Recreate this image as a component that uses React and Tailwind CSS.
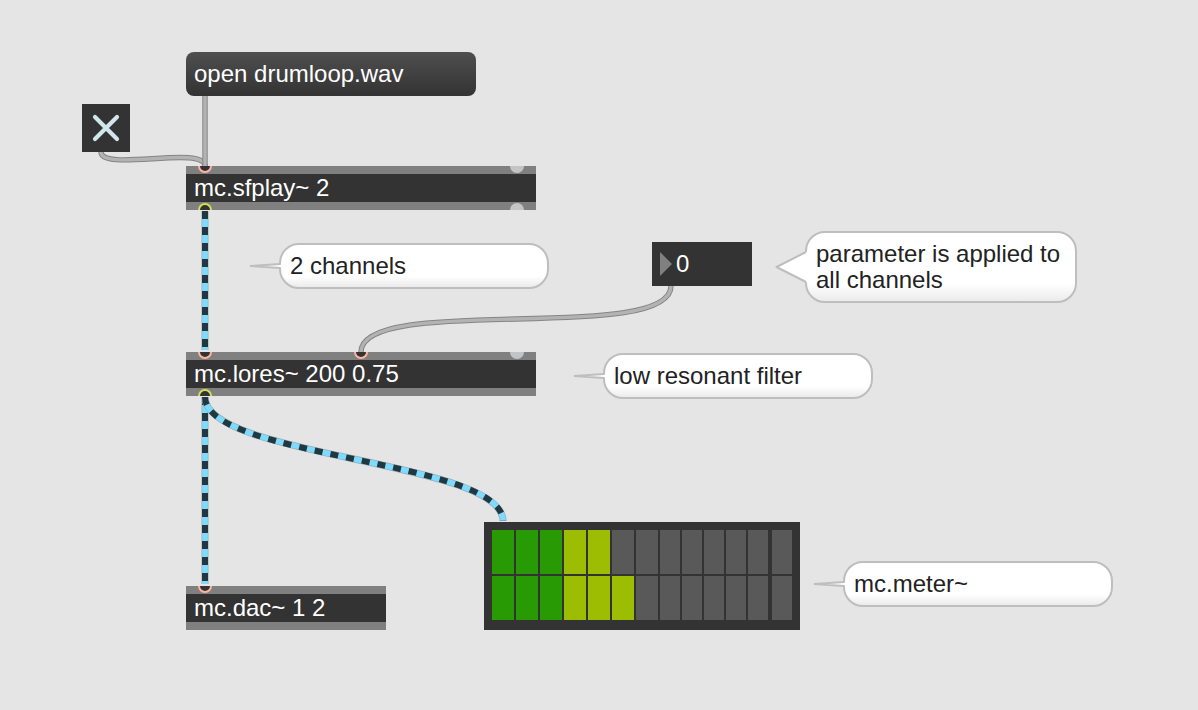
import React, { useState } from "react";

const PORT_COLORS = {
  control: { fill: "#333333", ring: "#ffb3a3" },
  signal: { fill: "#333333", ring: "#d2e052" },
  plain: { fill: "#c3c4c6", ring: "#c3c4c6" },
};

function Port({ kind, side }) {
  const { fill, ring } = PORT_COLORS[kind];
  return (
    <svg width="14" height="7" viewBox={side === "in" ? "0 7 14 7" : "0 0 14 7"} aria-hidden="true">
      <circle cx="7" cy="7" r="6" fill={fill} stroke={ring} strokeWidth="2" />
    </svg>
  );
}

function ObjectBox({ place, text, inlets, outlets }) {
  return (
    <div className={`absolute bg-[#333333] text-white ${place}`}>
      <div className="flex h-2 items-start justify-between bg-[#808080] px-3">
        {inlets.map((kind, i) => (
          <Port key={i} kind={kind} side="in" />
        ))}
      </div>
      <p className="px-2 leading-7">{text}</p>
      <div className="flex h-2 items-end justify-between bg-[#808080] px-3">
        {outlets.map((kind, i) => (
          <Port key={i} kind={kind} side="out" />
        ))}
      </div>
    </div>
  );
}

function Bubble({ place, wideTail = false, children }) {
  return (
    <div
      className={`absolute rounded-[20px] border-2 border-[#bebebe] bg-linear-to-b from-white from-75% to-[#ebebeb] px-[9px] py-2 leading-[26px] text-[#222222] ${place}`}
    >
      <svg
        className="absolute top-1/2 right-full -translate-y-1/2"
        width="32"
        height="40"
        viewBox="0 0 32 40"
        overflow="visible"
        aria-hidden="true"
      >
        {wideTail ? (
          <>
            <path d="M32.5 4.5V35.5L31 35 2 20 31 5Z" fill="#ffffff" />
            <path d="M31 5 1.5 20 31 35" fill="none" stroke="#bebebe" strokeWidth="2" strokeLinejoin="round" />
          </>
        ) : (
          <>
            <path d="M32.5 18.5V21.5L12 20.5V19.5Z" fill="#ffffff" />
            <path d="M31.5 18 1 20 31.5 22" fill="none" stroke="#bebebe" strokeWidth="1.8" strokeLinejoin="bevel" />
          </>
        )}
      </svg>
      <p>{children}</p>
    </div>
  );
}

function ControlCord({ d }) {
  return (
    <>
      <path d={d} stroke="#858585" strokeWidth="5.4" />
      <path d={d} stroke="#b3b3b3" strokeWidth="3.4" />
    </>
  );
}

function SignalCord({ d }) {
  return (
    <>
      <path d={d} stroke="#9aabb2" strokeWidth="7" />
      <path d={d} stroke="#7fdaff" strokeWidth="5.6" />
      <path d={d} stroke="#203840" strokeWidth="6" strokeDasharray="8 8" />
    </>
  );
}

const METER_LEVELS = [5, 6];
const METER_SEGMENTS = 13;

function segmentColor(index, level) {
  if (index >= level) return "bg-[#595959]";
  return index < 3 ? "bg-[#289a04]" : "bg-[#9cbd02]";
}

function Meter({ place }) {
  return (
    <div className={`absolute space-y-0.5 bg-[#333333] px-2 pt-2 pb-[10px] ${place}`}>
      {METER_LEVELS.map((level, channel) => (
        <div
          key={channel}
          role="meter"
          aria-label={`Channel ${channel + 1}`}
          aria-valuemin={0}
          aria-valuemax={METER_SEGMENTS}
          aria-valuenow={level}
          className="grid h-11 grid-cols-[repeat(7,22px)_repeat(5,20px)_22px] gap-0.5"
        >
          {Array.from({ length: METER_SEGMENTS }, (_, i) => (
            <span key={i} className={`last:ml-0.5 ${segmentColor(i, level)}`} />
          ))}
        </div>
      ))}
    </div>
  );
}

export default function App() {
  const [playing, setPlaying] = useState(true);
  const [cutoff, setCutoff] = useState("0");

  return (
    <main className="relative min-h-screen overflow-hidden bg-[#e5e5e5] font-['Liberation_Sans',Arial,sans-serif] text-2xl">
      <button
        type="button"
        className="absolute top-[52px] left-[186px] h-11 w-[290px] rounded-lg bg-linear-to-b from-[#4f4f4f] to-[#333333] px-2 text-left leading-7 text-white"
      >
        open drumloop.wav
      </button>

      <label className="absolute top-[104px] left-[82px] block size-12 bg-[#333333]">
        <input
          type="checkbox"
          aria-label="Play"
          checked={playing}
          onChange={(e) => setPlaying(e.target.checked)}
          className="absolute inset-0 size-full appearance-none"
        />
        {playing && (
          <svg className="pointer-events-none relative" width="48" height="48" viewBox="0 0 48 48" aria-hidden="true">
            <path d="M13 13 35 35M35 13 13 35" stroke="#d0e8ec" strokeWidth="4.2" strokeLinecap="round" />
          </svg>
        )}
      </label>

      <ObjectBox
        place="left-[186px] top-[166px] w-[350px]"
        text="mc.sfplay~ 2"
        inlets={["control", "plain"]}
        outlets={["signal", "plain"]}
      />
      <ObjectBox
        place="left-[186px] top-[352px] w-[350px]"
        text="mc.lores~ 200 0.75"
        inlets={["control", "control", "plain"]}
        outlets={["signal"]}
      />
      <ObjectBox place="left-[186px] top-[586px] w-[200px]" text="mc.dac~ 1 2" inlets={["control"]} outlets={[]} />

      <label className="absolute top-[242px] left-[652px] flex h-11 w-[100px] items-center gap-1 bg-[#333333] px-2 text-white">
        <svg className="shrink-0" width="12" height="24" viewBox="0 0 12 24" aria-hidden="true">
          <path d="M0 0 12 12 0 24Z" fill="#808080" />
        </svg>
        <input
          type="text"
          inputMode="numeric"
          aria-label="Cutoff"
          value={cutoff}
          onChange={(e) => setCutoff(e.target.value)}
          className="h-7 w-full min-w-0 bg-transparent leading-7 outline-none"
        />
      </label>

      <Meter place="left-[484px] top-[522px] w-[316px]" />

      <Bubble place="left-[279px] top-[243px] w-[270px]">2 channels</Bubble>
      <Bubble place="left-[805px] top-[231px] w-[272px]" wideTail>
        parameter is applied to all channels
      </Bubble>
      <Bubble place="left-[603px] top-[353px] w-[270px]">low resonant filter</Bubble>
      <Bubble place="left-[843px] top-[561px] w-[270px]">mc.meter~</Bubble>

      <svg
        className="pointer-events-none absolute top-0 left-0"
        width="820"
        height="640"
        viewBox="0 0 820 640"
        fill="none"
        aria-hidden="true"
      >
        <ControlCord d="M101 152C101 172 205 145 205 166" />
        <ControlCord d="M205 96V166" />
        <ControlCord d="M671 286C671 345 361 293 361 352" />
        <SignalCord d="M205 211V350" />
        <SignalCord d="M205 397V584" />
        <SignalCord d="M205 397C205 458 503 460 503 521" />
      </svg>
    </main>
  );
}
